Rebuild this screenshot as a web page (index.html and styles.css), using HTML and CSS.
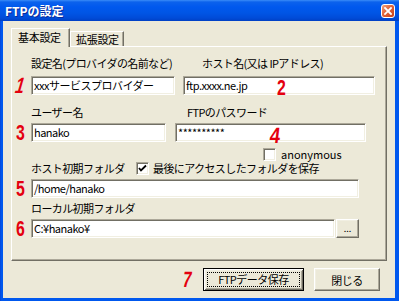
FILE: index.html
```html
<!doctype html>
<html lang="ja">
<head>
    <meta charset="utf-8">
    <title>FTPの設定</title>
    <link rel="stylesheet" href="styles.css">
</head>
<body>
    <div class="window">
        <div class="titlebar">
            <span class="title">FTPの設定</span>
            <span class="close">
                <svg width="8" height="8" viewBox="0 0 8 8"><path d="M1 1 L7 7 M7 1 L1 7" stroke="#fff" stroke-width="1.8" stroke-linecap="square"/></svg>
            </span>
        </div>
        <div class="frame">
            <div class="client">
                <!-- tab strip -->
                <div class="tabs">
                    <div class="tab active">基本設定</div>
                    <div class="tab">拡張設定</div>
                </div>

                <div class="panel">
                    <div class="labels">
                        <span class="lbl" style="width:171px">設定名(プロバイダの名前など)</span>
                        <span class="lbl">ホスト名(又は IPアドレス)</span>
                    </div>
                    <div class="fieldrow gap-a">
                        <span class="num one">1</span>
                        <div class="edit" style="width:144px">xxxサービスプロバイダー</div>
                        <div class="edit" style="width:192px">ftp.xxxx.ne.jp</div>
                    </div>

                    <div class="labels row-b">
                        <span class="lbl" style="width:156px">ユーザー名</span>
                        <span class="lbl">FTPのパスワード</span>
                    </div>
                    <div class="fieldrow gap-b">
                        <span class="num">3</span>
                        <div class="edit" style="width:135px">hanako</div>
                        <div class="edit" style="width:191px">**********</div>
                    </div>

                    <div class="checkline anon">
                        <span class="check"></span>
                        <span class="latin">anonymous</span>
                    </div>

                    <div class="labels checkline">
                        <span class="lbl" style="width:105px">ホスト初期フォルダ</span>
                        <span class="check on">
                            <svg width="9" height="9" viewBox="0 0 9 9"><path d="M1 4 L3 6.5 L8 1.5" fill="none" stroke="#000" stroke-width="1.8"/></svg>
                        </span>
                        <span class="lbl">最後にアクセスしたフォルダを保存</span>
                    </div>
                    <div class="fieldrow gap-c">
                        <span class="num">5</span>
                        <div class="edit" style="width:328px">/home/hanako</div>
                    </div>

                    <div class="labels row-d">
                        <span class="lbl">ローカル初期フォルダ</span>
                    </div>
                    <div class="fieldrow gap-c">
                        <span class="num">6</span>
                        <div class="edit" style="width:304px">C:¥hanako¥</div>
                        <button class="btn browse">...</button>
                    </div>

                    <!-- annotation marks drawn over the edit boxes -->
                    <span class="num mark two">2</span>
                    <span class="num mark four">4</span>
                </div>

                <div class="actions">
                    <span class="num">7</span>
                    <button class="btn default" style="width:101px"><span class="focus">FTPデータ保存</span></button>
                    <button class="btn" style="width:66px">閉じる</button>
                </div>
            </div>
        </div>
    </div>
</body>
</html>
```

FILE: styles.css
```css
html, body {
    margin: 0;
    padding: 0;
}

body {
    width: 399px;
    height: 301px;
    overflow: hidden;
    background: #ece9d8;
    font-family: "Noto Sans CJK JP", sans-serif;
    font-size: 11px;
    color: #000;
}

.window {
    width: 399px;
    height: 301px;
    display: flex;
    flex-direction: column;
    background: #0055e5;
}

.titlebar {
    height: 21px;
    flex: none;
    display: flex;
    align-items: center;
    justify-content: space-between;
    padding: 0 4px 0 5px;
    background: linear-gradient(#3a8cf8 0, #0c62ec 2px, #0058ee 7px, #0055e5 13px, #004bd8 18px, #0040c4 21px);
}

.title {
    color: #fff;
    font-weight: bold;
    font-size: 12px;
    text-shadow: 1px 1px #0b2a9a;
}

.close {
    width: 14px;
    height: 14px;
    box-sizing: border-box;
    border: 1px solid #fff;
    border-radius: 3px;
    background: linear-gradient(135deg, #f3a27e, #e0643a 45%, #c8401a);
    display: flex;
    align-items: center;
    justify-content: center;
}

.frame {
    flex: 1;
    display: flex;
    padding: 0 4px 3px 3px;
    background: linear-gradient(90deg, #0a3fd0, #0058ee 1px, #0058ee);
}

.client {
    flex: 1;
    display: flex;
    flex-direction: column;
    padding: 0 8px;
    background: #ece9d8;
}

/* tabs */
.tabs {
    height: 25px;
    flex: none;
    display: flex;
    align-items: flex-end;
}

.tab {
    height: 15px;
    width: 54px;
    box-sizing: border-box;
    border-style: solid;
    border-width: 1px 1px 0 1px;
    border-color: #fff #716f64 transparent #fff;
    box-shadow: inset -1px 0 #aca899;
    line-height: 14px;
    padding-left: 5px;
    letter-spacing: -0.3px;
}

.tab.active {
    height: 19px;
    width: 59px;
    margin-bottom: -1px;
    position: relative;
    z-index: 1;
    background: #ece9d8;
    line-height: 17px;
    padding-left: 6px;
}

/* tab page */
.panel {
    position: relative;
    height: 215px;
    flex: none;
    box-sizing: border-box;
    border: 1px solid;
    border-color: #fff #716f64 #716f64 #fff;
    box-shadow: inset -1px -1px #aca899;
    padding: 9px 0 0 4px;
}

.labels {
    display: flex;
    height: 14px;
    line-height: 14px;
    margin-left: 15px;
}

.lbl {
    letter-spacing: -0.6px;
    white-space: nowrap;
}

.row-b {
    margin-top: 10px;
}

.row-d {
    margin-top: 3px;
}

.fieldrow {
    display: flex;
    align-items: center;
    gap: 8px;
    height: 19px;
}

.gap-a {
    margin-top: 6px;
}

.gap-b {
    margin-top: 4px;
    gap: 9px;
}

.gap-c {
    margin-top: 4px;
    gap: 1px;
}

.fieldrow .num {
    width: 15px;
    margin-right: -8px;
}

.gap-c .num {
    margin-right: -1px;
}

.gap-b .num {
    margin-right: -9px;
}

.edit {
    height: 19px;
    box-sizing: border-box;
    border: 1px solid;
    border-color: #aca899 #fff #fff #aca899;
    box-shadow: inset 1px 1px #716f64, inset -1px -1px #f1efe2;
    background: #fff;
    padding: 0 2px;
    line-height: 17px;
    white-space: nowrap;
    overflow: hidden;
    letter-spacing: -0.5px;
}

.checkline {
    display: flex;
    align-items: center;
}

.anon {
    height: 13px;
    margin-top: 6px;
    padding-left: 247px;
    gap: 5px;
}

.latin {
    line-height: 13px;
}

.check {
    width: 13px;
    height: 13px;
    flex: none;
    box-sizing: border-box;
    border: 1px solid;
    border-color: #aca899 #fff #fff #aca899;
    box-shadow: inset 1px 1px #716f64, inset -1px -1px #f1efe2;
    background: #fff;
    display: flex;
    align-items: center;
    justify-content: center;
}

.check.on {
    margin-right: 4px;
}

/* red annotation numbers */
.num {
    color: #e4000f;
    font-family: "Liberation Sans", sans-serif;
    font-weight: bold;
    font-size: 22px;
    line-height: 19px;
    display: inline-block;
    transform: scaleX(0.72);
    transform-origin: left center;
}

.num.one {
    transform: scaleX(0.72) skewX(-22deg);
}

.mark {
    position: absolute;
}

.two {
    left: 265px;
    top: 31px;
}

.four {
    left: 258px;
    top: 79px;
    transform: scaleX(0.85) skewX(-8deg);
}

/* buttons */
.btn {
    height: 23px;
    box-sizing: border-box;
    border: 1px solid;
    border-color: #fff #716f64 #716f64 #fff;
    box-shadow: inset -1px -1px #aca899, inset 1px 1px #f1efe2;
    background: #ece9d8;
    font-family: "Noto Sans CJK JP", sans-serif;
    font-size: 11px;
    color: #000;
    padding: 0;
    letter-spacing: -0.5px;
}

.btn.browse {
    width: 23px;
    height: 19px;
    font-size: 9px;
    line-height: 9px;
    letter-spacing: 0;
}

.btn.default {
    border: 1px solid #000;
    box-shadow: inset 1px 1px #fff, inset -1px -1px #716f64, inset 2px 2px #f1efe2, inset -2px -2px #aca899;
    padding: 3px;
}

.focus {
    display: block;
    height: 15px;
    line-height: 13px;
    border: 1px dotted #000;
    box-sizing: border-box;
}

.actions {
    display: flex;
    justify-content: flex-end;
    align-items: center;
    gap: 10px;
    margin-top: 7px;
    padding-right: 7px;
}

.actions .num {
    width: 10px;
    transform: scaleX(0.72) skewX(-12deg);
}
```
